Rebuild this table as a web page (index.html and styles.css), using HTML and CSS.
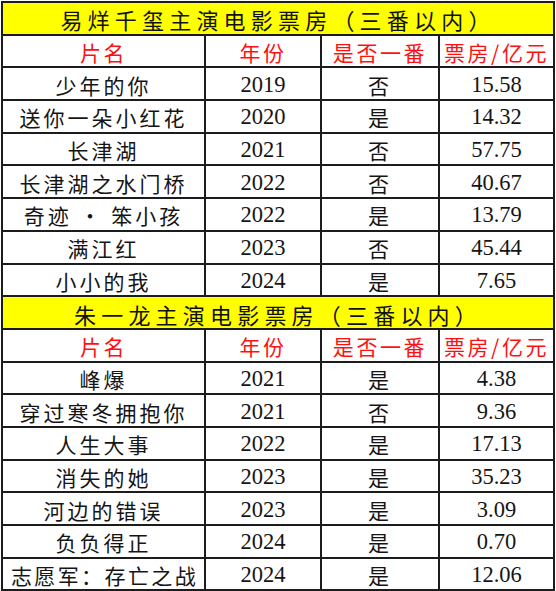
FILE: index.html
```html
<!DOCTYPE html>
<html lang="zh-CN">
<head>
<meta charset="utf-8">
<link rel="stylesheet" href="styles.css">
</head>
<body>
<table class="sheet">
  <colgroup>
    <col class="c1"><col class="c2"><col class="c3"><col class="c4">
  </colgroup>
  <tr class="title"><td colspan="4">易烊千玺主演电影票房（三番以内）</td></tr>
  <tr class="head"><td>片名</td><td>年份</td><td>是否一番</td><td>票房/亿元</td></tr>
  <tr><td>少年的你</td><td class="num">2019</td><td>否</td><td class="num">15.58</td></tr>
  <tr><td>送你一朵小红花</td><td class="num">2020</td><td>是</td><td class="num">14.32</td></tr>
  <tr><td>长津湖</td><td class="num">2021</td><td>否</td><td class="num">57.75</td></tr>
  <tr><td>长津湖之水门桥</td><td class="num">2022</td><td>否</td><td class="num">40.67</td></tr>
  <tr><td>奇迹 · 笨小孩</td><td class="num">2022</td><td>是</td><td class="num">13.79</td></tr>
  <tr><td>满江红</td><td class="num">2023</td><td>否</td><td class="num">45.44</td></tr>
  <tr><td>小小的我</td><td class="num">2024</td><td>是</td><td class="num">7.65</td></tr>
  <tr class="title"><td colspan="4">朱一龙主演电影票房（三番以内）</td></tr>
  <tr class="head"><td>片名</td><td>年份</td><td>是否一番</td><td>票房/亿元</td></tr>
  <tr><td>峰爆</td><td class="num">2021</td><td>是</td><td class="num">4.38</td></tr>
  <tr><td>穿过寒冬拥抱你</td><td class="num">2021</td><td>否</td><td class="num">9.36</td></tr>
  <tr><td>人生大事</td><td class="num">2022</td><td>是</td><td class="num">17.13</td></tr>
  <tr><td>消失的她</td><td class="num">2023</td><td>是</td><td class="num">35.23</td></tr>
  <tr><td>河边的错误</td><td class="num">2023</td><td>是</td><td class="num">3.09</td></tr>
  <tr><td>负负得正</td><td class="num">2024</td><td>是</td><td class="num">0.70</td></tr>
  <tr><td class="tight">志愿军：存亡之战</td><td class="num">2024</td><td>是</td><td class="num">12.06</td></tr>
</table>
</body>
</html>
```

FILE: styles.css
```css
html, body {
  margin: 0;
  padding: 0;
  background: #ffffff;
}
body {
  padding: 1px 0 0 1px;
}
.sheet {
  border-collapse: collapse;
  table-layout: fixed;
  width: 552px;
  font-family: "Noto Sans CJK SC", "Noto Sans", sans-serif;
  color: #151515;
}
.c1 { width: 203px; }
.c2 { width: 116px; }
.c3 { width: 118px; }
.c4 { width: 115px; }
.sheet td {
  border: 2px solid #1c1c1c;
  height: 28.7px;
  padding: 2px 0 0 0;
  text-align: center;
  vertical-align: middle;
  font-size: 21px;
  line-height: 26px;
  letter-spacing: 3px;
  font-weight: 400;
  white-space: nowrap;
  overflow: hidden;
}
.sheet .num {
  font-family: "Liberation Serif", serif;
  font-size: 22.5px;
  letter-spacing: 0;
}
.sheet .tight {
  letter-spacing: 2.4px;
  text-indent: 2px;
}
.title td {
  background: #ffff00;
  font-size: 22px;
  letter-spacing: 5.2px;
  color: #111;
}
.head td {
  color: #ff1010;
  font-size: 21px;
  letter-spacing: 2.6px;
}
```
